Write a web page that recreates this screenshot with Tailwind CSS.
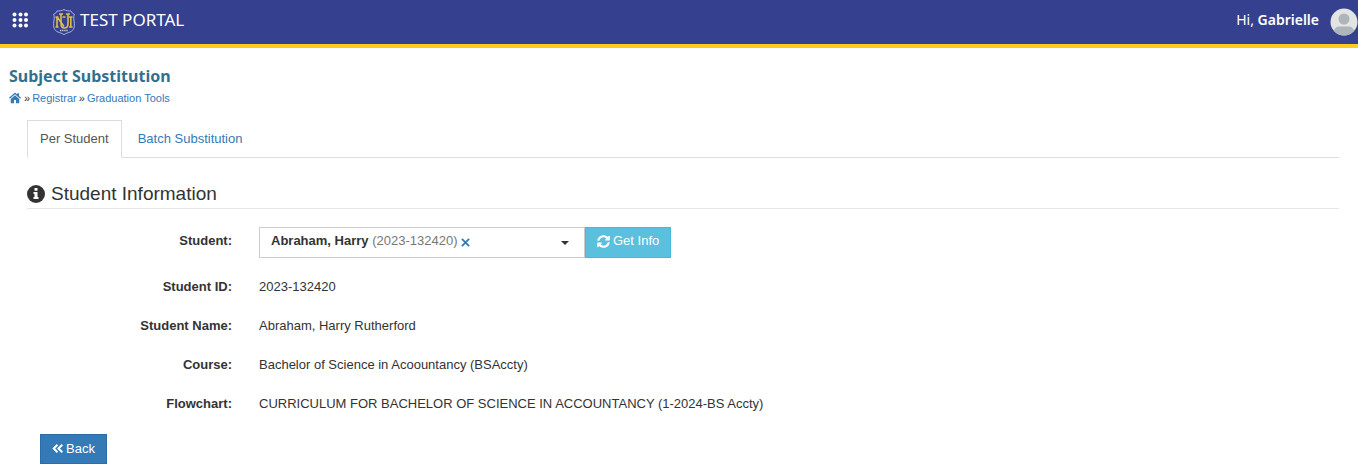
<!DOCTYPE html>
<html lang="en">
<head>
<meta charset="utf-8">
<meta name="viewport" content="width=device-width, initial-scale=1">
<title>Subject Substitution</title>
<script src="https://cdn.jsdelivr.net/npm/@tailwindcss/browser@4"></script>
</head>
<body class="bg-white font-['Liberation_Sans',Arial,sans-serif] text-[13px] leading-5 text-[#333]">
<header class="flex h-12 items-center border-b-4 border-[#ffcc1d] bg-[#35408e] pl-3 font-['Noto_Sans',sans-serif] text-white">
  <button type="button" aria-label="Apps" class="mb-1">
    <svg class="size-4" viewBox="0 0 16 16" fill="currentColor"><circle cx="2.5" cy="2.5" r="2"/><circle cx="8.5" cy="2.5" r="2"/><circle cx="14" cy="2.5" r="2"/><circle cx="2.5" cy="8" r="2"/><circle cx="8.5" cy="8" r="2"/><circle cx="14" cy="8" r="2"/><circle cx="2.5" cy="13.5" r="2"/><circle cx="8.5" cy="13.5" r="2"/><circle cx="14" cy="13.5" r="2"/></svg>
  </button>
  <a href="#" class="ml-6 flex items-center gap-1">
    <svg class="h-7 w-6" viewBox="0 0 24 28" fill="none"><path d="M12 1.500 C10 2.800 7.500 3 5 3 C4.500 4.500 3.500 5.500 1.700 6.200 C2.500 9 2.300 11 1.800 14 C1.200 19 2 22.500 6 24 C8.500 25 10.500 25.500 12 26.700 C13.500 25.500 15.500 25 18 24 C22 22.500 22.800 19 22.200 14 C21.700 11 21.500 9 22.300 6.200 C20.500 5.500 19.500 4.500 19 3 C16.500 3 14 2.800 12 1.500Z" stroke="#a9b4e0"/><path d="M3.500 9h3M5 9v10M3.500 19h3M5.500 9.500l6.500 9M10.500 9h3" stroke="#dcc04a" stroke-width="1.600"/><path d="M7 6h4M9 6v9.500q0 4.500 3.500 4.500t3.500-4.500V6M14 6h4M18.800 9v10M17 9h3.500M17 19h3.500" stroke="#dcc04a" stroke-width="1.600"/><path d="M8 22.500h8" stroke="#c3cbea" stroke-width="1.500" stroke-dasharray="1.400 .7"/></svg>
    <span class="mb-1 text-[17px] leading-6">TEST PORTAL</span>
  </a>
  <div class="ml-auto flex items-center gap-[11px]">
    <span class="mb-1 text-[14px]">Hi, <b class="font-semibold">Gabrielle</b></span>
    <svg class="size-7" viewBox="0 0 28 28"><defs><clipPath id="av"><circle cx="14" cy="14" r="13.500"/></clipPath></defs><g clip-path="url(#av)"><path d="M0 0h28v28H0z" fill="#e1e3e4"/><circle cx="14" cy="11" r="5.500" fill="#adb5b9"/><path d="M4 28v-4q0-5.500 6-5.500h8q6 0 6 5.500v4z" fill="#adb5b9"/></g></svg>
  </div>
</header>
<main class="px-[9px] pt-4">
  <h1 class="font-['Noto_Sans',sans-serif] text-[16px] leading-6 font-bold text-[#31708f]">Subject Substitution</h1>
  <nav aria-label="Breadcrumb" class="flex items-center gap-[2px] text-[11px] leading-5">
    <a href="#" aria-label="Home" class="mr-px text-[#337ab7]"><svg class="h-3 w-3" viewBox="0 0 24 22" fill="currentColor"><path d="M12 0 0 10.500l1.700 1.900L12 3.400l10.300 9L24 10.500l-4-3.500V1.500h-3.500V4z"/><path d="M12 5.500 3.500 13v8.500H10V15h4v6.500h6.500V13z"/></svg></a>
    <span>»</span><a href="#" class="text-[#337ab7]">Registrar</a><span>»</span><a href="#" class="text-[#337ab7]">Graduation Tools</a>
  </nav>
  <div class="mr-[10px] ml-[18px] mt-3 flex border-b border-[#ddd]" role="tablist">
    <button type="button" role="tab" aria-selected="true" class="-mb-px border border-[#ddd] border-b-white bg-white px-3 py-2 text-[#555]">Per Student</button>
    <button type="button" role="tab" aria-selected="false" class="px-4 py-2 text-[#337ab7]">Batch Substitution</button>
  </div>
  <section class="mr-[10px] ml-[18px] mt-[22px]">
    <h2 class="flex items-center gap-[6px] border-b border-[#e5e5e5] text-[19px] leading-7"><svg class="size-[18px]" viewBox="0 0 18 18"><circle cx="9" cy="9" r="9" fill="#333"/><path d="M7.500 3h3v2.700h-3zM6.500 7h4v5h1v2h-5v-2h1V9h-1z" fill="#fff"/></svg>Student Information</h2>
    <div class="mt-[18px] grid grid-cols-[205px_1fr] items-center gap-x-[27px] gap-y-[19px]">
      <label for="student" class="pb-[3px] text-right font-bold">Student:</label>
      <div class="flex h-[31px]">
        <div class="flex w-[326px] items-center border border-[#ccc] pl-[11px]">
          <span class="pb-[3px] whitespace-nowrap"><b>Abraham, Harry</b> <span class="text-[#777]">(2023-132420)</span></span>
          <button type="button" aria-label="Clear" class="ml-1 text-[#337ab7]"><svg class="size-[9px]" viewBox="0 0 10 10" stroke="currentColor" stroke-width="2"><path d="M1 1l8 8M9 1l-8 8"/></svg></button>
          <button id="student" type="button" aria-label="Choose student" class="flex flex-1 items-center justify-end self-stretch pr-[15px]"><svg class="h-1 w-2" viewBox="0 0 8 4"><path d="M0 0h8L4 4z" fill="#333"/></svg></button>
        </div>
        <button type="button" class="flex items-center gap-[3px] border border-[#46b8da] bg-[#5bc0de] px-[11px] pb-[3px] text-white"><svg class="size-[13px]" viewBox="0 0 512 512" fill="currentColor"><path d="M370 133C339 104 299 88 256 88c-78 0-145 53-163 126-1 5-6 9-12 9H24c-7 0-13-7-12-14C33 94 135 8 256 8c66 0 127 26 171 69l36-36c15-15 41-4 41 17v134c0 13-11 24-24 24H346c-21 0-32-26-17-41zM32 296h134c21 0 32 26 17 41l-41 42c31 29 71 45 114 45 78 0 145-53 163-126 1-5 6-9 12-9h57c7 0 13 7 12 14-21 115-123 201-244 201-66 0-127-26-171-69l-36 36c-15 15-41 4-41-17V320c0-13 11-24 24-24z"/></svg>Get Info</button>
      </div>
      <span class="text-right font-bold">Student ID:</span><span>2023-132420</span>
      <span class="text-right font-bold">Student Name:</span><span>Abraham, Harry Rutherford</span>
      <span class="text-right font-bold">Course:</span><span>Bachelor of Science in Acoountancy (BSAccty)</span>
      <span class="text-right font-bold">Flowchart:</span><span>CURRICULUM FOR BACHELOR OF SCIENCE IN ACCOUNTANCY (1-2024-BS Accty)</span>
    </div>
    <button type="button" class="mt-5 ml-[13px] flex h-[30px] items-center gap-[3px] border border-[#2e6da4] bg-[#337ab7] px-[11px] pb-px text-white"><svg class="h-[9px] w-[11px]" viewBox="0 0 11 9" fill="none" stroke="currentColor" stroke-width="2"><path d="M5.500.7 1.700 4.500l3.800 3.800M10.300.7 6.500 4.500l3.800 3.800"/></svg>Back</button>
  </section>
</main>
</body>
</html>
